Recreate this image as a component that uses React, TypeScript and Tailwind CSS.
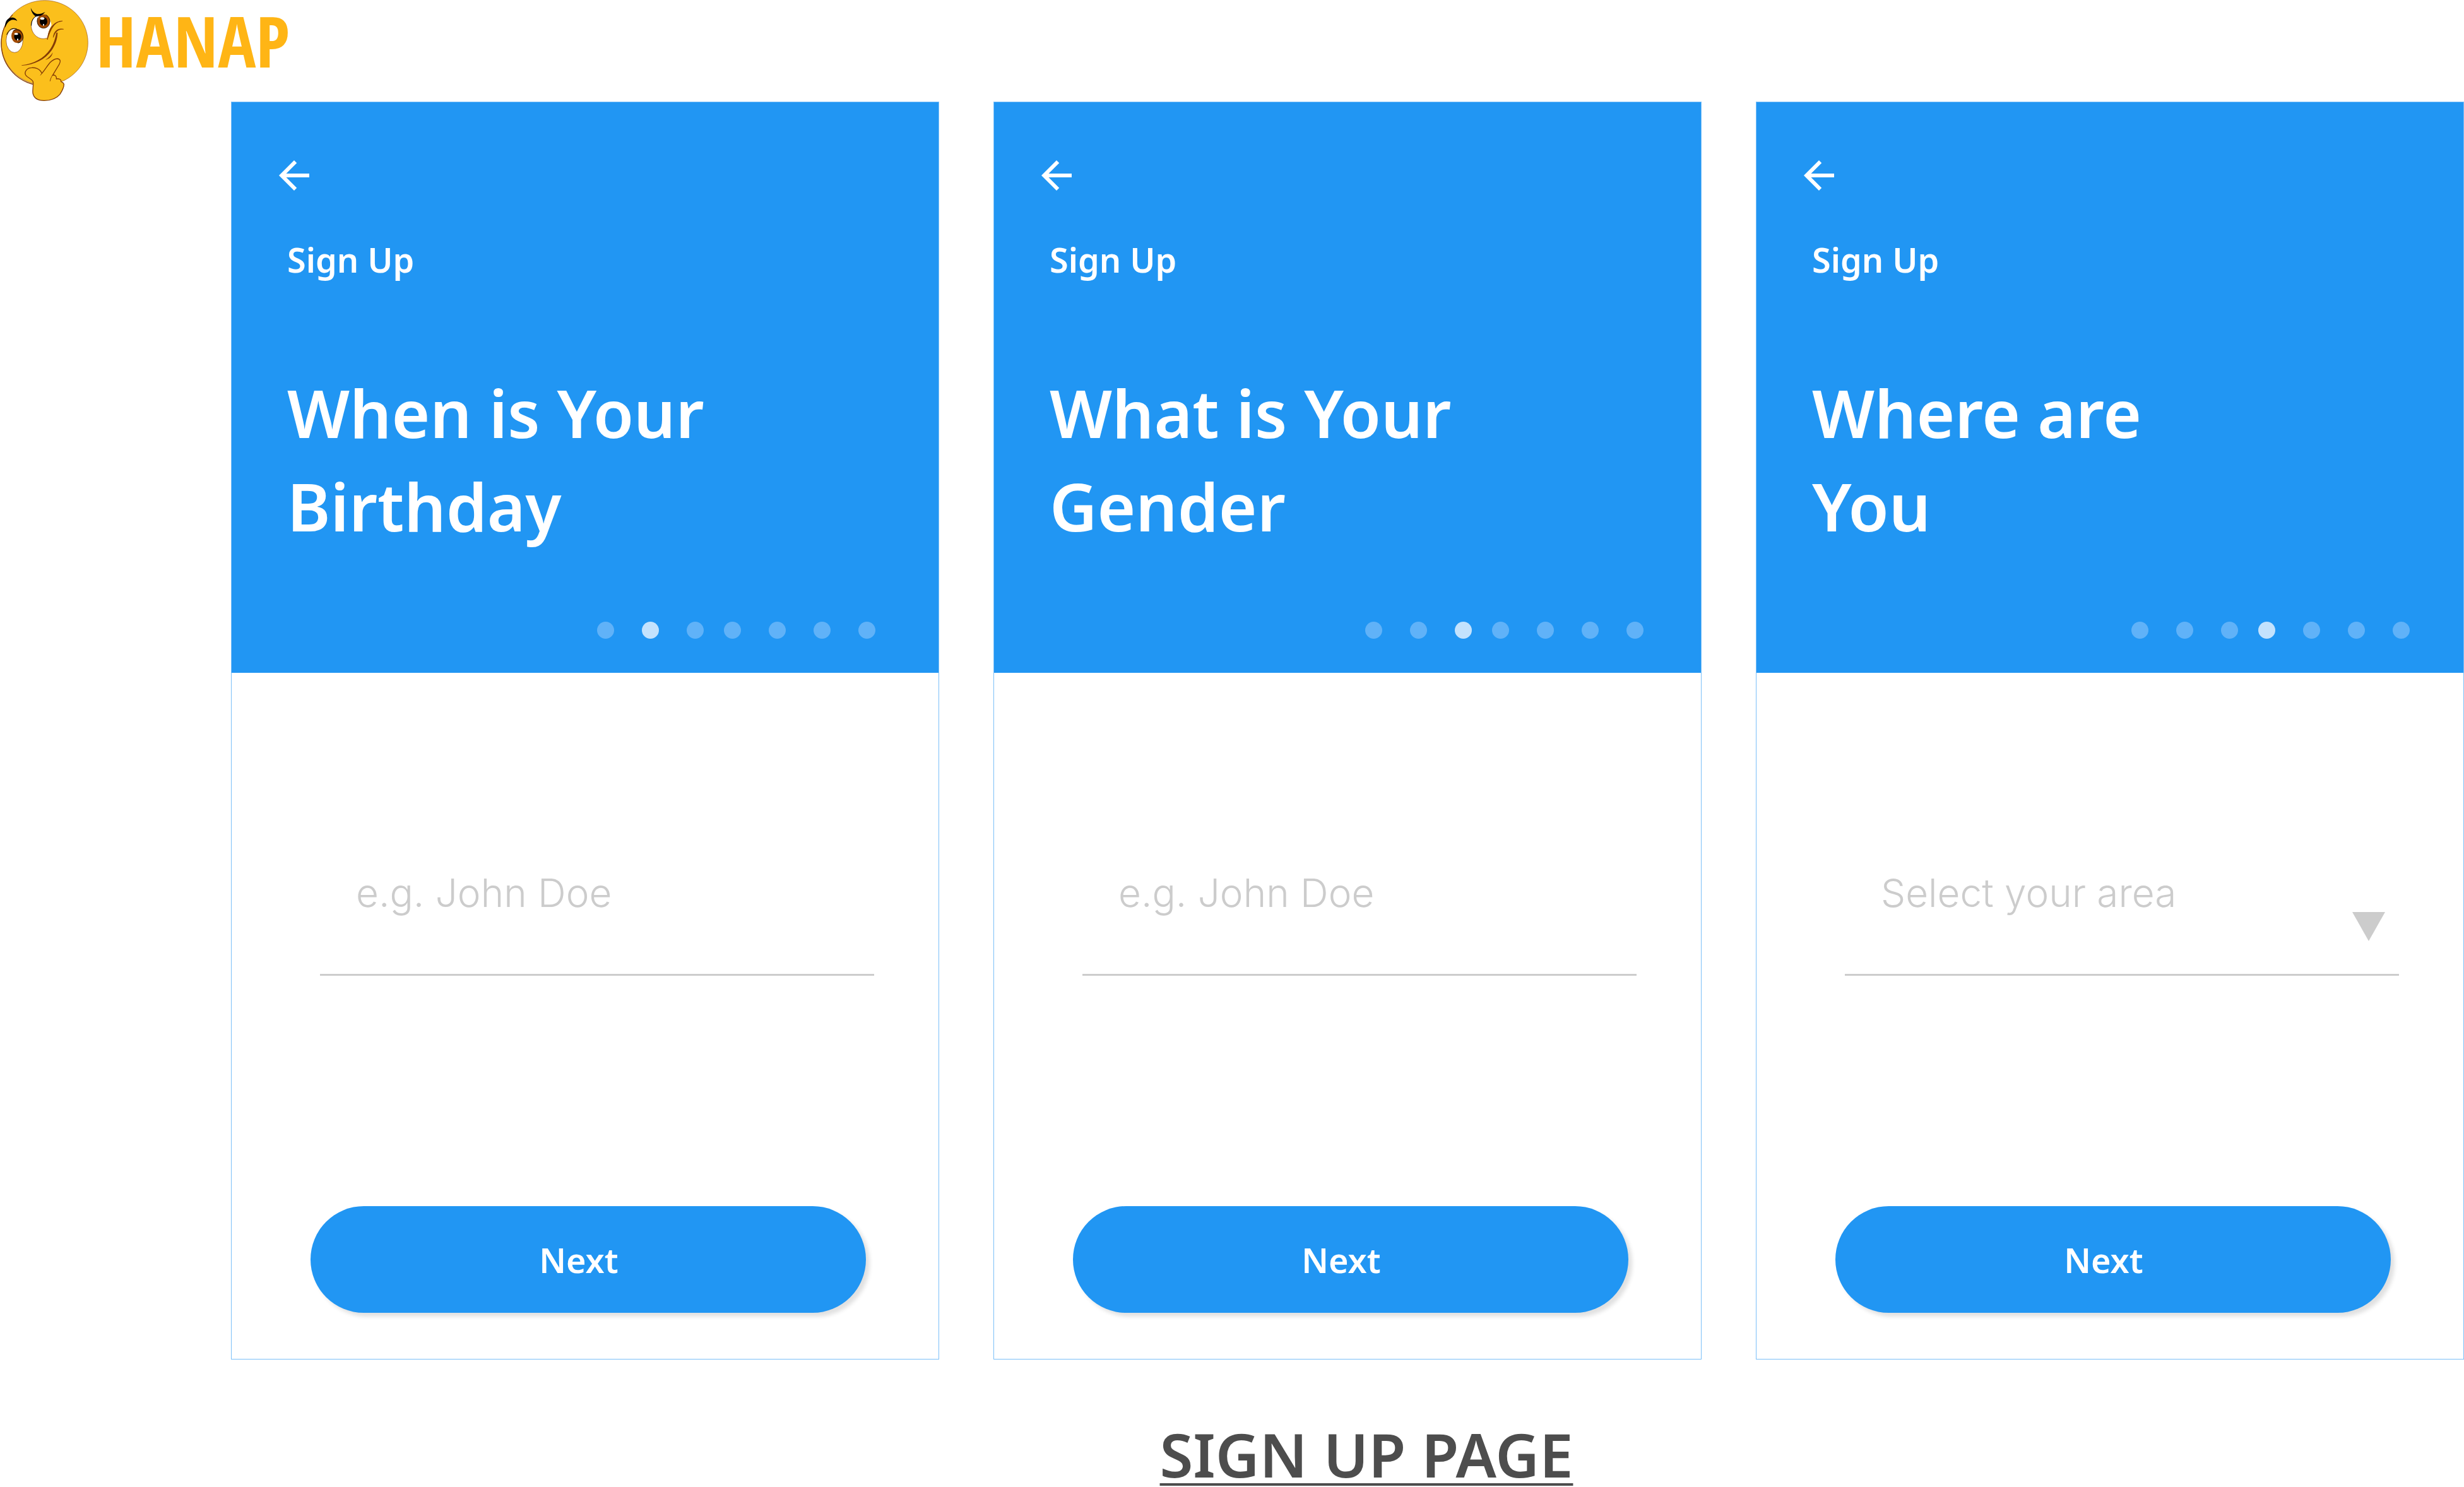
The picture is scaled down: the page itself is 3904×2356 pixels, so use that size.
type Step = {
  id: string;
  title: [string, string];
  active: number;
  dotsPadding: string;
  field: "text" | "select";
  hint: string;
};

const steps: Step[] = [
  { id: "birthday", title: ["When is Your", "Birthday"], active: 1, dotsPadding: "pr-[100px]", field: "text", hint: "e.g. John Doe" },
  { id: "gender", title: ["What is Your", "Gender"], active: 2, dotsPadding: "pr-[91px]", field: "text", hint: "e.g. John Doe" },
  { id: "area", title: ["Where are", "You"], active: 3, dotsPadding: "pr-[85px]", field: "select", hint: "Select your area" },
];

function ThinkingFace() {
  return (
    <svg viewBox="0 0 420 483" className="h-[161px] w-[140px] shrink-0" aria-hidden="true">
      <ellipse cx="212" cy="203" rx="206" ry="201" fill="#fbbf1c" stroke="#9a5a1c" strokeWidth="2" />
      <path d="M157 401 C70 378 5 300 6 203 C7 150 28 105 60 70" fill="none" stroke="#843c06" strokeWidth="4" />
      {/* left eye */}
      <ellipse cx="69" cy="193" rx="40" ry="57" fill="#fff" stroke="#843c06" strokeWidth="2" />
      <path d="M32 165 C42 138 62 130 82 139" fill="none" stroke="#000" strokeWidth="3" />
      <ellipse cx="82" cy="171" rx="28" ry="33" fill="#a04a02" />
      <path d="M62 148 C78 132 108 145 110 178 C108 194 98 203 84 204" fill="none" stroke="#000" strokeWidth="3" />
      <ellipse cx="84" cy="174" rx="17" ry="18" fill="#000" />
      <ellipse cx="77" cy="161" rx="9" ry="5" fill="#fff" />
      <ellipse cx="84" cy="188" rx="3" ry="5" fill="#fff" />
      {/* right eye */}
      <path d="M176 74 C158 82 148 100 148 122 C149 158 176 184 205 184 C213 184 220 182 226 179 C228 156 234 140 245 120 C243 106 240 98 232 84 Z" fill="#fff" />
      <path d="M176 74 C158 82 148 100 148 122 C149 158 176 184 205 184 C213 184 220 182 226 179" fill="none" stroke="#843c06" strokeWidth="2" />
      <path d="M172 77 C158 84 149 100 149 122" fill="none" stroke="#000" strokeWidth="3" />
      <ellipse cx="207" cy="101" rx="31" ry="33" fill="#a04a02" />
      <path d="M180 83 C170 110 185 134 208 134 C226 133 238 118 237 98 C234 84 228 76 218 70" fill="none" stroke="#000" strokeWidth="2" />
      <ellipse cx="207" cy="102" rx="18" ry="20" fill="#000" />
      <ellipse cx="201" cy="88" rx="10" ry="6" fill="#fff" />
      <ellipse cx="207" cy="118" rx="3" ry="5" fill="#fff" />
      {/* brows */}
      <path d="M24 132 C22 100 38 82 60 83 C72 84 79 92 82 100 C70 92 58 92 48 98 C34 106 30 118 24 132Z" fill="#000" />
      <path d="M146 37 C152 52 163 65 178 67 C192 67 203 63 215 57 C205 68 195 75 188 76 L172 79 C158 72 148 55 146 37Z" fill="#000" />
      {/* cheek, mouth and chin */}
      <path d="M225 188 C230 150 244 104 296 100 C258 102 240 140 225 188Z" fill="#843c06" stroke="#843c06" strokeWidth="3" />
      <path d="M253 178 C256 148 275 132 302 139 C283 137 265 145 253 178Z" fill="#843c06" stroke="#843c06" strokeWidth="2" />
      <path d="M103 310 C160 304 208 278 238 235 C256 207 262 185 268 155 L274 155 C272 190 262 215 245 240 C215 283 165 308 103 312Z" fill="#843c06" />
      <path d="M215 285 C232 275 243 262 251 249 C247 268 235 280 215 285Z" fill="#843c06" />
      {/* hand */}
      <path
        d="M199 349 C190 325 165 321 150 322 C130 322 117 338 120 352 C124 368 150 372 157 388 C160 405 154 425 156 442 C160 465 180 478 210 478 C245 478 270 466 285 448 C297 430 304 415 304 400 C302 392 292 390 290 388 C292 378 280 372 268 375 C270 362 260 354 250 358 L282 305 C290 291 287 280 272 279 C258 280 245 290 238 297 C225 312 212 335 199 349Z"
        fill="#fbbf1c"
        stroke="#843c06"
        strokeWidth="4"
        strokeLinejoin="round"
      />
      <path d="M250 357 C244 366 240 374 238 386 M199 349 L192 358" fill="none" stroke="#843c06" strokeWidth="3" />
    </svg>
  );
}

function Dot({ on }: { on: boolean }) {
  return <span className={on ? "size-[27px] rounded-full bg-[#c3e2fd]" : "size-[27px] rounded-full bg-[#60b2f8]"} />;
}

function Progress({ active, padding }: { active: number; padding: string }) {
  return (
    <div className={`mt-[109px] flex justify-end gap-8 ${padding}`}>
      <div className="flex gap-11">
        {[0, 1, 2].map((i) => (
          <Dot key={i} on={i === active} />
        ))}
      </div>
      <div className="flex gap-11">
        {[3, 4, 5, 6].map((i) => (
          <Dot key={i} on={i === active} />
        ))}
      </div>
    </div>
  );
}

const fieldClass =
  "block w-full appearance-none border-b-[3px] border-[#ccc] bg-transparent pb-[92px] pl-[57px] font-[Inter,sans-serif] text-[62px] leading-[72px] font-light outline-none";

function StepCard({ step }: { step: Step }) {
  const label = step.title.join(" ");
  return (
    <section className="border border-[#7cc0f8] bg-white">
      <header className="bg-[#2196f3] pt-[92px] pb-[54px] text-white">
        <div className="pl-[75px]">
          <button type="button" aria-label="Back" className="block">
            <svg viewBox="4 4 16 16" className="size-12" fill="currentColor" aria-hidden="true">
              <path d="M20 11H7.83l5.59-5.59L12 4l-8 8 8 8 1.41-1.41L7.83 13H20v-2z" />
            </svg>
          </button>
          <div className="pl-[13px]">
            <p className="mt-[73px] text-[54px] leading-[72px] font-semibold">Sign Up</p>
            <h2 className="mt-[133px] text-[104px] leading-[148px] font-semibold">
              {step.title[0]}
              <br />
              {step.title[1]}
            </h2>
          </div>
        </div>
        <Progress active={step.active} padding={step.dotsPadding} />
      </header>
      <form className="pt-[313px] pb-[73px]">
        <div className="relative mr-[102px] ml-[140px]">
          {step.field === "text" ? (
            <input type="text" aria-label={label} placeholder={step.hint} className={`${fieldClass} text-gray-700 placeholder:text-[#ccc] placeholder:opacity-100`} />
          ) : (
            <>
              <select aria-label={label} className={`${fieldClass} text-[#ccc]`}>
                <option>{step.hint}</option>
              </select>
              <svg viewBox="0 0 52 46" className="pointer-events-none absolute right-[22px] bottom-[55px] h-[46px] w-[52px]" fill="#ccc" aria-hidden="true">
                <path d="M0 0H52L26 46Z" />
              </svg>
            </>
          )}
        </div>
        <div className="mt-[365px] mr-[115px] ml-[125px]">
          <button type="button" className="h-[169px] w-full rounded-full bg-[#2196f3] pr-[30px] text-[54px] leading-[72px] font-semibold text-white shadow-[6px_6px_6px_rgba(0,0,0,0.12)]">
            Next
          </button>
        </div>
      </form>
    </section>
  );
}

export default function App() {
  return (
    <div className="bg-white font-['Noto_Sans','Open_Sans',sans-serif]">
      <div className="flex items-start gap-3">
        <ThinkingFace />
        <h1 className="font-['Open_Sans_Condensed','Open_Sans',sans-serif] text-[112px] leading-[128px] font-bold text-[#ffb515]">HANAP</h1>
      </div>
      <main className="pl-[366px]">
        <div className="grid grid-cols-3 gap-[86px]">
          {steps.map((s) => (
            <StepCard key={s.id} step={s} />
          ))}
        </div>
        <p className="mt-[100px] pl-[60px] text-center text-[96px] leading-[100px] font-semibold text-[#4d4d4d] underline decoration-[5px] underline-offset-[9px]">
          SIGN UP PAGE
        </p>
      </main>
    </div>
  );
}
